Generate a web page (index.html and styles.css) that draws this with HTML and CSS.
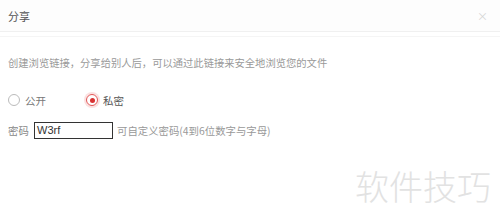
FILE: index.html
```html
<!DOCTYPE html>
<html lang="zh">
<head>
<meta charset="utf-8">
<link rel="stylesheet" href="styles.css">
</head>
<body>
<div class="dialog">
  <div class="header">
    <span class="title">分享</span>
    <span class="close">×</span>
  </div>
  <div class="body">
    <p class="desc">创建浏览链接，分享给别人后，可以通过此链接来安全地浏览您的文件</p>
    <div class="radios">
      <label class="radio"><span class="dot"></span>公开</label>
      <label class="radio checked"><span class="dot"></span>私密</label>
    </div>
    <div class="pwd">
      <span class="pwd-label">密码</span>
      <span class="input">W3rf</span>
      <span class="hint">可自定义密码(4到6位数字与字母)</span>
    </div>
  </div>
  <div class="watermark">软件技巧</div>
</div>
</body>
</html>
```
FILE: styles.css
```css
html, body {
  margin: 0;
  padding: 0;
  background: #fff;
  font-family: "Noto Sans CJK SC", "Noto Sans", sans-serif;
}
.dialog {
  position: relative;
  width: 500px;
  height: 224px;
  overflow: hidden;
}
.header {
  height: 31px;
  background: #fdfdfd;
  border-bottom: 1px solid #f0f0f0;
  display: flex;
  align-items: center;
  justify-content: space-between;
  padding: 0 12px 0 8px;
}
.title {
  font-size: 11px;
  color: #555;
}
.close {
  font-size: 11px;
  color: #d5d5d5;
}
.body {
  margin-top: 4px;
  border-top: 1px solid #f5f5f5;
  padding: 0 8px;
}
.desc {
  margin: 19px 0 0;
  font-size: 10.3px;
  line-height: 14px;
  color: #999;
}
.radios {
  display: flex;
  gap: 40px;
  margin-top: 23px;
  height: 14px;
  align-items: center;
}
.radio {
  display: flex;
  align-items: center;
  gap: 5px;
  font-size: 10.5px;
  color: #777;
}
.dot {
  width: 10px;
  height: 10px;
  border: 1px solid #bbb;
  border-radius: 50%;
  display: flex;
  align-items: center;
  justify-content: center;
}
.checked .dot {
  border-color: #e25555;
  box-shadow: 0 0 0 2px #fbe1e1;
}
.checked .dot::after {
  content: "";
  width: 5px;
  height: 5px;
  border-radius: 50%;
  background: #d83333;
}
.checked {
  color: #555;
}
.pwd {
  display: flex;
  align-items: center;
  margin-top: 15px;
  font-size: 10.4px;
  color: #888;
}
.pwd-label {
  width: 26px;
}
.input {
  box-sizing: border-box;
  width: 79px;
  height: 17px;
  border: 1px solid #333;
  padding: 0 2px;
  font-size: 11px;
  line-height: 15px;
  color: #333;
  font-family: "Liberation Sans", sans-serif;
  margin-right: 4px;
}
.hint {
  color: #999;
}
.watermark {
  position: absolute;
  left: 355px;
  top: 162px;
  font-size: 34px;
  line-height: 48px;
  color: #e2e2e2;
  font-weight: 300;
}
```
